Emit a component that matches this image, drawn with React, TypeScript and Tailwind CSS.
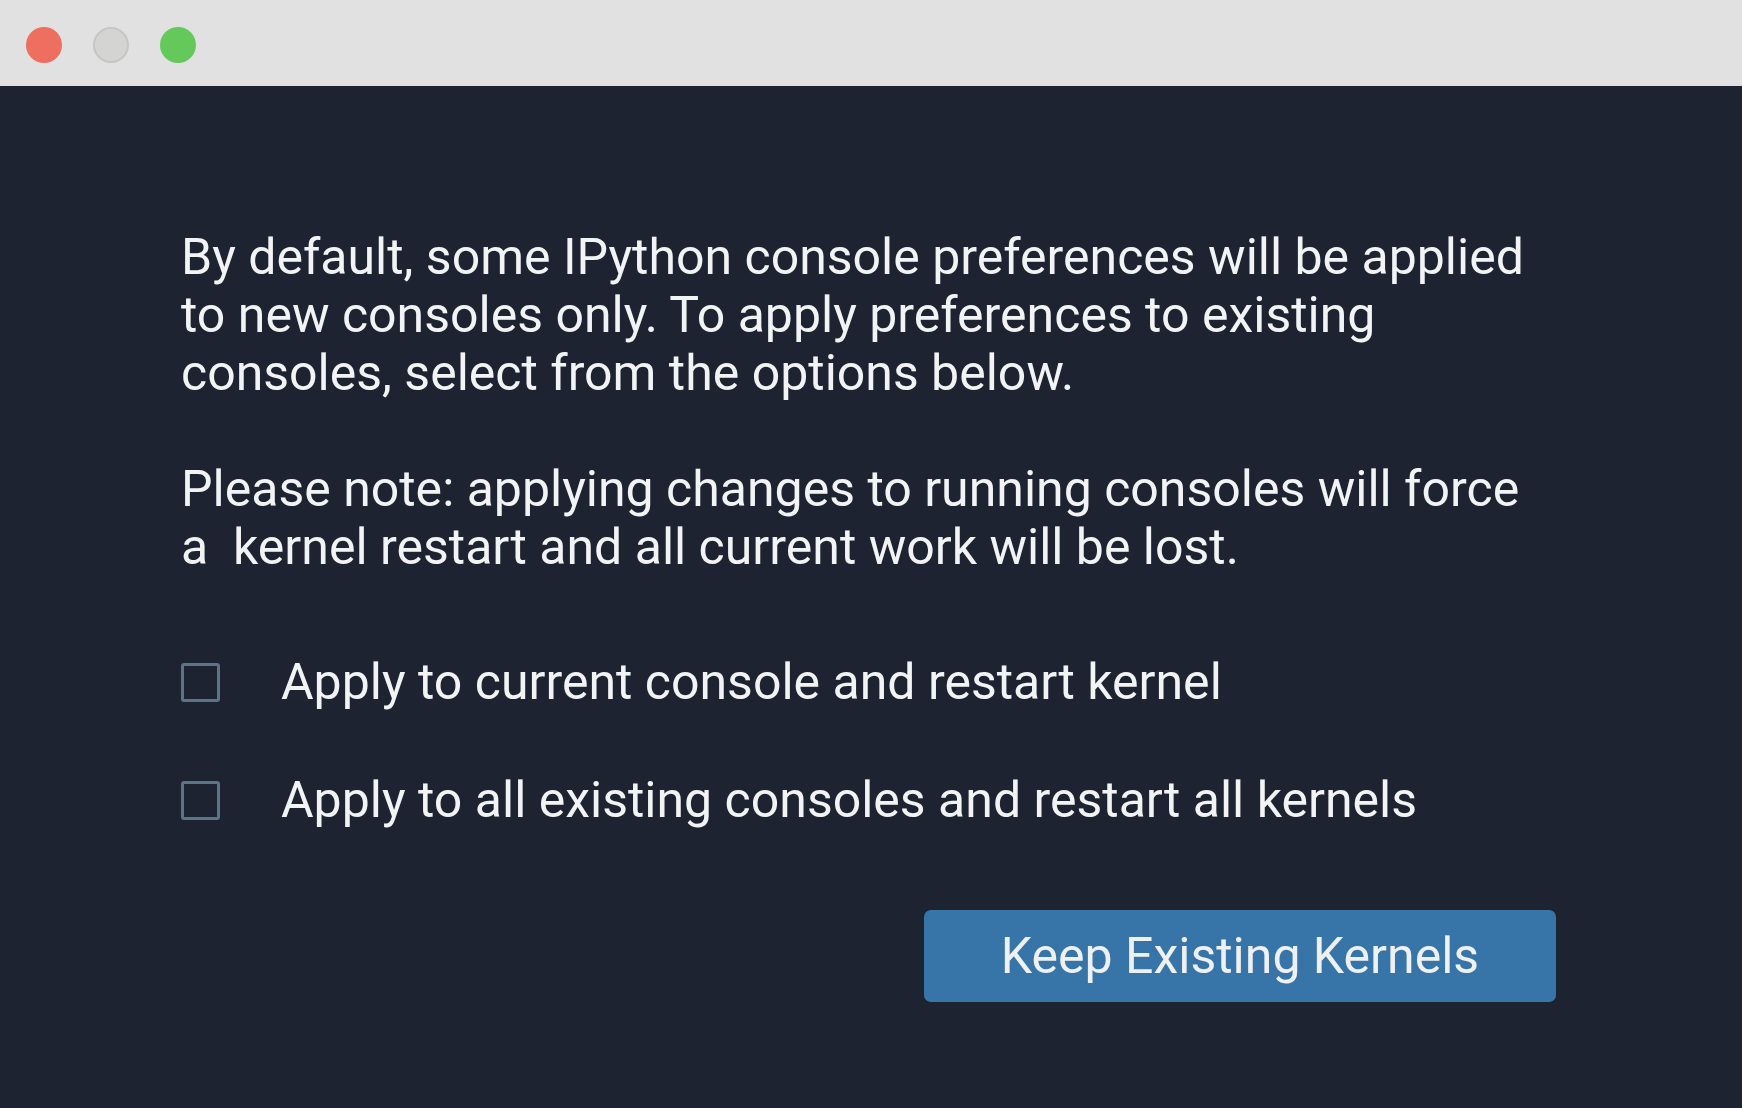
export default function App() {
  return (
    <div className="min-h-screen w-full bg-[#1d2330] font-['Roboto','Liberation_Sans',sans-serif]">
      {/* Window title bar */}
      <div className="flex h-[86px] items-start gap-[31px] bg-[#e1e1e1] pl-[26px] pt-[27px]">
        <span className="h-9 w-9 rounded-full bg-[#ee6e60]" />
        <span className="h-9 w-9 rounded-full border-2 border-[#c6c6c6] bg-[#d4d4d3]" />
        <span className="h-9 w-9 rounded-full bg-[#64c95a]" />
      </div>

      {/* Dialog body */}
      <div className="pl-[181px] pr-[186px] pt-[142px] pb-[106px] text-[50px] leading-[58px] text-[#f2f3f4]">
        <p className="whitespace-pre">
          {"By default, some IPython console preferences will be applied\nto new consoles only. To apply preferences to existing\nconsoles, select from the options below."}
        </p>
        <p className="mt-[58px] whitespace-pre">
          {"Please note: applying changes to running consoles will force\na  kernel restart and all current work will be lost."}
        </p>

        <div className="mt-[77px] flex flex-col gap-[60px]">
          <label className="flex items-center gap-[61px]">
            <span className="h-[39px] w-[39px] shrink-0 rounded-[3px] border-[3px] border-[#5b7488]" />
            <span>Apply to current console and restart kernel</span>
          </label>
          <label className="flex items-center gap-[61px]">
            <span className="h-[39px] w-[39px] shrink-0 rounded-[3px] border-[3px] border-[#5b7488]" />
            <span>Apply to all existing consoles and restart all kernels</span>
          </label>
        </div>

        <div className="mt-[81px] flex justify-end">
          <button
            type="button"
            className="flex h-[92px] w-[632px] items-center justify-center rounded-[7px] bg-[#3775a8] text-[50px] text-[#eef0f2]"
          >
            Keep Existing Kernels
          </button>
        </div>
      </div>
    </div>
  )
}
